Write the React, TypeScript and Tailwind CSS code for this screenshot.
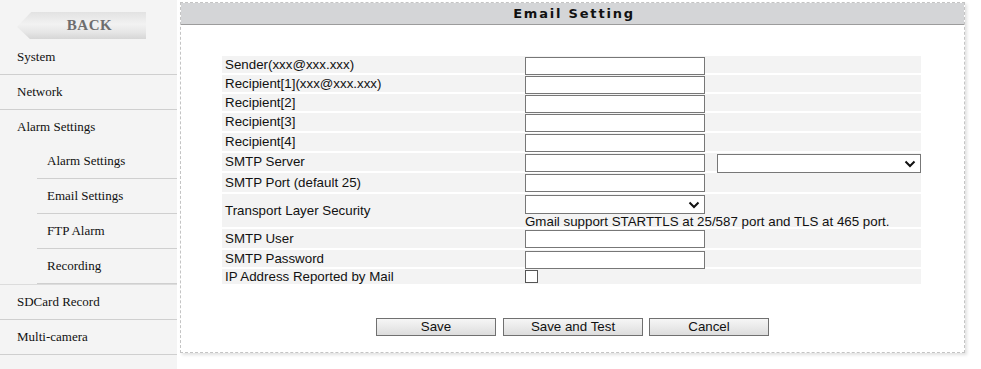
import React from "react";

const serif = "font-['Liberation_Serif','Times_New_Roman',serif]";
const sans = "font-['Liberation_Sans',Arial,sans-serif]";

function Chevron() {
  return (
    <svg width="12" height="8" viewBox="0 0 12 8" className="absolute right-[4px] top-1/2 -translate-y-1/2">
      <path d="M1.5 1.5 L6 6 L10.5 1.5" fill="none" stroke="#111" strokeWidth="2" />
    </svg>
  );
}

function TextBox() {
  return <div className="w-[180px] h-[18px] border border-[#777] bg-white shrink-0" />;
}

function SelectBox({ w }: { w: string }) {
  return (
    <div className={`relative ${w} h-[19px] border border-[#777] bg-white shrink-0`}>
      <Chevron />
    </div>
  );
}

function Row({
  label,
  h,
  children,
}: {
  label: string;
  h: string;
  children: React.ReactNode;
}) {
  return (
    <div className={`flex ${h} bg-[#f3f3f3] border-b-2 border-white`}>
      <div className="w-[303px] pl-[3px] flex items-center text-[13.33px] text-[#111]">{label}</div>
      <div className="flex-1 pt-[1px]">{children}</div>
    </div>
  );
}

function NavItem({ label, sub, line = true }: { label: string; sub?: boolean; line?: boolean }) {
  return (
    <div className={`${line ? "h-[35px]" : "h-[34px]"} ${sub ? "pl-[37px]" : ""}`}>
      <div
        className={`h-full flex items-center ${sub ? "pl-[10px]" : "pl-[17px]"} ${
          line ? "border-b border-[#cfcfcf]" : ""
        }`}
      >
        {label}
      </div>
    </div>
  );
}

export default function App() {
  return (
    <div className={`flex w-[981px] h-[369px] bg-white ${sans}`}>
      {/* sidebar */}
      <aside className={`w-[177px] shrink-0 bg-[#f4f4f4] pt-[12px] text-[13px] text-[#111] ${serif}`}>
        <div className="ml-[17px] w-[129px] h-[27px] flex items-center justify-center [clip-path:polygon(0_55%,11%_0,100%_0,100%_100%,10%_100%)] bg-[linear-gradient(to_bottom,#e2e2e2,#f2f2f2_45%,#e6e6e6_75%,#d6d6d6)]">
          <span className="text-[15px] font-bold tracking-[0.5px] text-[#6e6e6e] pl-[16px]">BACK</span>
        </div>
        <div className="mt-[1px]">
          <NavItem label="System" />
          <NavItem label="Network" />
          <NavItem label="Alarm Settings" line={false} />
          <NavItem label="Alarm Settings" sub />
          <NavItem label="Email Settings" sub />
          <NavItem label="FTP Alarm" sub />
          <NavItem label="Recording" sub />
          <div className="border-t border-[#dcdcdc]" />
          <NavItem label="SDCard Record" />
          <NavItem label="Multi-camera" />
        </div>
      </aside>

      {/* panel */}
      <main className="ml-[3px] mt-[2px] w-[785px] h-[351px] border border-dashed border-[#c4c4c4] shadow-[2px_2px_3px_rgba(0,0,0,0.12)] flex flex-col">
        <div className="h-[22px] bg-[#d4d5d7] border-b border-[#9c9c9c] flex items-center justify-center">
          <span className="font-['DejaVu_Sans',Verdana,sans-serif] font-bold text-[13px] tracking-[1.8px] text-[#111] pl-[3px]">
            Email Setting
          </span>
        </div>

        <div className="pt-[31px] pl-[41px] w-[740px]">
          <div className="w-[699px] flex flex-col">
            <Row label="Sender(xxx@xxx.xxx)" h="h-[19px]"><TextBox /></Row>
            <Row label="Recipient[1](xxx@xxx.xxx)" h="h-[19px]"><TextBox /></Row>
            <Row label="Recipient[2]" h="h-[19px]"><TextBox /></Row>
            <Row label="Recipient[3]" h="h-[20px]"><TextBox /></Row>
            <Row label="Recipient[4]" h="h-[20px]"><TextBox /></Row>
            <Row label="SMTP Server" h="h-[20px]">
              <div className="flex gap-[12px]">
                <TextBox />
                <SelectBox w="w-[204px]" />
              </div>
            </Row>
            <Row label="SMTP Port (default 25)" h="h-[21px]"><TextBox /></Row>
            <Row label="Transport Layer Security" h="h-[35px]">
              <SelectBox w="w-[180px]" />
              <div className="text-[13.33px] leading-[15px] text-[#111]">
                Gmail support STARTTLS at 25/587 port and TLS at 465 port.
              </div>
            </Row>
            <Row label="SMTP User" h="h-[21px]"><TextBox /></Row>
            <Row label="SMTP Password" h="h-[19px]"><TextBox /></Row>
            <Row label="IP Address Reported by Mail" h="h-[17px]">
              <div className="w-[13px] h-[13px] border border-[#555] bg-white" />
            </Row>
          </div>
        </div>

        <div className="mt-[32px] flex justify-center text-[13.33px] text-[#111]">
          <button className="w-[120px] h-[18px] leading-[16px] border border-[#707070] bg-[linear-gradient(#f6f6f6,#dddddd)]">Save</button>
          <button className="ml-[7px] w-[140px] h-[18px] leading-[16px] border border-[#707070] bg-[linear-gradient(#f6f6f6,#dddddd)]">Save and Test</button>
          <button className="ml-[6px] w-[120px] h-[18px] leading-[16px] border border-[#707070] bg-[linear-gradient(#f6f6f6,#dddddd)]">Cancel</button>
        </div>
      </main>
    </div>
  );
}
